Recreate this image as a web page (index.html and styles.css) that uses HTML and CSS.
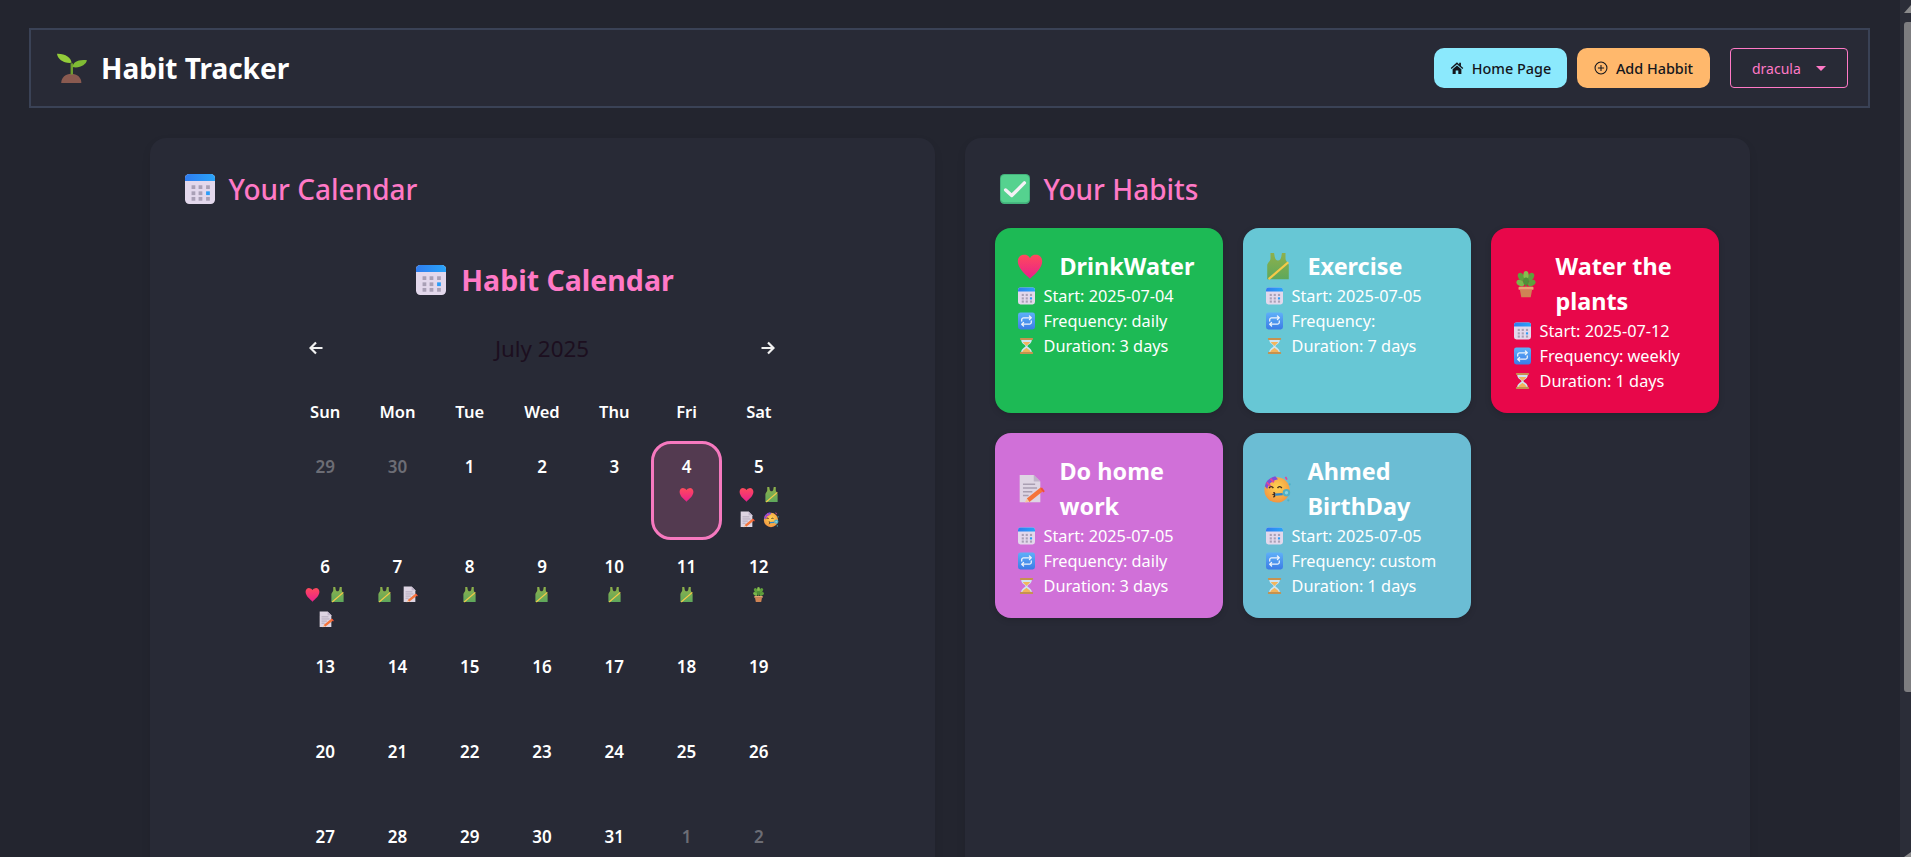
FILE: index.html
```html
<!DOCTYPE html>
<html lang="en">
<head>
    <meta charset="UTF-8">
    <meta name="viewport" content="width=device-width, initial-scale=1.0">
    <title>Habit Tracker</title>
    <link rel="stylesheet" href="styles.css">
</head>
<body>
    <!-- emoji sprite -->
    <svg class="sprite" xmlns="http://www.w3.org/2000/svg">
        <defs>
            <linearGradient id="g-heart" x1="0" y1="0" x2="0" y2="1"><stop offset="0" stop-color="#ff4a5c"/><stop offset="1" stop-color="#e8208c"/></linearGradient>
            <linearGradient id="g-shirt" x1="0" y1="0" x2="0" y2="1"><stop offset="0" stop-color="#8fb04a"/><stop offset="1" stop-color="#5ea85c"/></linearGradient>
            <linearGradient id="g-repeat" x1="0" y1="0" x2="0" y2="1"><stop offset="0" stop-color="#5fb0f8"/><stop offset="1" stop-color="#3b7ce6"/></linearGradient>
            <linearGradient id="g-cal" x1="0" y1="0" x2="1" y2="0"><stop offset="0" stop-color="#2f7cf0"/><stop offset="1" stop-color="#2aa4f8"/></linearGradient>
            <radialGradient id="g-face" cx="0.5" cy="0.4" r="0.7"><stop offset="0" stop-color="#ffd452"/><stop offset="1" stop-color="#f08a3e"/></radialGradient>
        </defs>
        <symbol id="i-seedling" viewBox="0 0 32 32">
            <path d="M4.500 32c0-6 4.600-10 10.800-10S26 26 26 32z" fill="#8a5a50"/>
            <path d="M14.500 23V11h2.600v12z" fill="#6f9e2f"/>
            <path d="M15.500 10.500C15 5 9 .5 0 .8c.5 5.500 7 10.500 15.500 9.700z" fill="#93cc3a"/>
            <path d="M16.500 15c.5-5 5.500-8.500 15.500-7.300-1 4.500-7.500 9-15.500 7.300z" fill="#7fbb34"/>
        </symbol>
        <symbol id="i-calendar" viewBox="0 0 32 32">
            <rect width="32" height="32" rx="4.500" fill="#e3d8ec"/>
            <path d="M0 7.500V4.500A4.500 4.500 0 0 1 4.500 0h23A4.500 4.500 0 0 1 32 4.500v3z" fill="url(#g-cal)"/>
            <g fill="#a9a0b6">
                <rect x="7" y="12" width="4" height="4"/><rect x="14.500" y="12" width="4" height="4"/><rect x="22.500" y="12" width="4" height="4"/>
                <rect x="7" y="18.500" width="4" height="4"/><rect x="14.500" y="18.500" width="4" height="4"/>
                <rect x="7" y="24.500" width="4" height="4"/><rect x="14.500" y="24.500" width="4" height="4"/><rect x="22.500" y="24.500" width="4" height="4"/>
            </g>
            <rect x="22.500" y="18.500" width="4" height="4" fill="#2a9cf8"/>
        </symbol>
        <symbol id="i-check" viewBox="0 0 32 32">
            <rect width="32" height="32" rx="4.500" fill="#43b27c"/>
            <rect x="1" y="1" width="30" height="29" rx="4" fill="#55d28f"/>
            <path d="M6 17l6.500 6L26 9.500" fill="none" stroke="#f4f1f6" stroke-width="3.600" stroke-linecap="round" stroke-linejoin="round"/>
        </symbol>
        <symbol id="i-heart" viewBox="0 0 32 32">
            <path d="M16 29.500C10.500 24.500 3 18.500 3 11 3 6.300 6.600 3.500 10.300 4c2.700 0 4.700 1.400 5.700 3.700C17 5.400 19 4 21.700 4 25.400 3.500 29 6.300 29 11c0 7.500-7.500 13.500-13 18.500z" fill="url(#g-heart)"/>
        </symbol>
        <symbol id="i-shirt" viewBox="0 0 32 32">
            <path d="M8 2h3.800l.7 4c.5 2.500 1.500 4 3.500 4s3-1.500 3.500-4l.7-4H24v6c0 3 3.500 4.500 3.500 7.500V30h-23V15.500C4.500 12.500 8 11 8 8z" fill="url(#g-shirt)"/>
            <path d="M6 30L27 12" stroke="#f7c948" stroke-width="2.400"/>
        </symbol>
        <symbol id="i-plant" viewBox="0 0 32 32">
            <path d="M15.200 20V9h1.600v11z" fill="#6b7f3a"/>
            <ellipse cx="11" cy="8.500" rx="3.200" ry="4.800" transform="rotate(-30 11 8.500)" fill="#5f9f3c"/>
            <ellipse cx="21" cy="8.500" rx="3.200" ry="4.800" transform="rotate(30 21 8.500)" fill="#5f9f3c"/>
            <ellipse cx="16" cy="6.500" rx="2.800" ry="4.500" fill="#86bd4e"/>
            <ellipse cx="10" cy="15" rx="3" ry="4.500" transform="rotate(-60 10 15)" fill="#79b64a"/>
            <ellipse cx="22" cy="15" rx="3" ry="4.500" transform="rotate(60 22 15)" fill="#5f9f3c"/>
            <ellipse cx="16" cy="13" rx="3" ry="4" fill="#4f8f38"/>
            <rect x="8" y="19" width="16" height="3.200" rx="1" fill="#e6a272"/>
            <path d="M9.500 22h13L21 30h-10z" fill="#cf8354"/>
        </symbol>
        <symbol id="i-memo" viewBox="0 0 32 32">
            <path d="M5 1h15l7 7v22H5z" fill="#ded5e3"/>
            <path d="M20 1l7 7h-7z" fill="#bfb3c8"/>
            <path d="M8.500 11h13M8.500 15h15M8.500 19h10M8.500 23h6" stroke="#a99fb2" stroke-width="1.500"/>
            <path d="M14 28l15-12" stroke="#f5733a" stroke-width="4.500"/>
            <path d="M28 15l3 4" stroke="#f04f3a" stroke-width="2"/>
            <path d="M10.500 30.500l2-4 2.500 3z" fill="#f7c9a0"/>
        </symbol>
        <symbol id="i-party" viewBox="0 0 32 32">
            <circle cx="15" cy="17" r="13.500" fill="url(#g-face)"/>
            <path d="M2 13C3 7 7 4 13 2.500l3 3C10 7 6 10 4.500 16z" fill="#7d4fd8"/>
            <path d="M4 9l4 4M8 5l3.500 4" stroke="#e0489a" stroke-width="2"/>
            <path d="M6.500 15c1-2 3.500-2 4.500 0M15.500 15c1-2 3.500-2 4.500 0" fill="none" stroke="#402a20" stroke-width="1.500"/>
            <path d="M11 20c2 0 2 1.500.5 2 1.500.5 1.500 2-.5 2.500" fill="none" stroke="#402a20" stroke-width="1.500"/>
            <path d="M13 22l8-.5" stroke="#2f86c9" stroke-width="2.500"/>
            <circle cx="25" cy="20" r="4" fill="#4fb0c8"/>
            <circle cx="25" cy="20" r="1.800" fill="#8fd3dc"/>
            <path d="M24 3l1.500 3" stroke="#e0489a" stroke-width="1.800"/>
            <circle cx="28.500" cy="11" r="1.200" fill="#4fb0c8"/>
            <circle cx="27" cy="28" r="1.200" fill="#4fb0c8"/>
        </symbol>
        <symbol id="i-repeat" viewBox="0 0 32 32">
            <rect width="32" height="32" rx="4.500" fill="url(#g-repeat)"/>
            <g fill="none" stroke="#eef4fb" stroke-width="2.400" stroke-linecap="round" stroke-linejoin="round">
                <path d="M7 16v-2.500A3.500 3.500 0 0 1 10.500 10H25M21.500 6.500L25 10l-3.500 3.500"/>
                <path d="M25 16v2.500a3.500 3.500 0 0 1-3.500 3.500H7M10.500 18.500L7 22l3.500 3.500"/>
            </g>
        </symbol>
        <symbol id="i-hourglass" viewBox="0 0 32 32">
            <path d="M6 4h20c0 7-6.500 8.500-8.500 12 2 3.500 8.500 5 8.500 12H6c0-7 6.500-8.500 8.500-12C12.500 12.500 6 11 6 4z" fill="#cfe5f2"/>
            <path d="M9 8.500h14c-1.200 3-5.200 4.500-7 7.500-1.800-3-5.800-4.500-7-7.500z" fill="#f2b55c"/>
            <path d="M16 19.500c-2.500 2.500-7.500 4.500-8 8h16c-.5-3.500-5.500-5.500-8-8z" fill="#f2b55c"/>
            <rect x="3.500" y="1" width="25" height="3.500" rx="1.500" fill="#c6924f"/>
            <rect x="3.500" y="27.500" width="25" height="3.500" rx="1.500" fill="#c6924f"/>
        </symbol>
    </svg>

    <div class="app">
        <main class="page">
            <header class="navbar">
                <div class="brand">
                    <svg class="brand-icon"><use href="#i-seedling"/></svg>
                    <h1>Habit Tracker</h1>
                </div>
                <div class="nav-actions">
                    <a class="btn btn-home">
                        <svg class="btn-icon" viewBox="0 0 16 16"><path d="M8 1.500L.8 8l1 1.100L8 3.700l6.200 5.400 1-1.100-2.700-2.400V2h-2v1.900z" fill="currentColor"/><path d="M3 9.400l5-4.400 5 4.400v5.400H9.500v-4h-3v4H3z" fill="currentColor"/></svg>
                        Home Page
                    </a>
                    <a class="btn btn-add">
                        <svg class="btn-icon" viewBox="0 0 16 16"><circle cx="8" cy="8" r="6.800" fill="none" stroke="currentColor" stroke-width="1.200"/><path d="M8 4.500v7M4.500 8h7" stroke="currentColor" stroke-width="1.200"/></svg>
                        Add Habbit
                    </a>
                    <div class="theme-select">dracula<span class="caret"></span></div>
                </div>
            </header>

            <div class="columns">
                <section class="panel">
                    <h2 class="panel-title"><svg><use href="#i-calendar"/></svg>Your Calendar</h2>

                    <div class="calendar">
                        <h3 class="calendar-title"><svg><use href="#i-calendar"/></svg>Habit Calendar</h3>
                        <div class="calendar-nav">
                            <svg class="arrow" viewBox="0 0 14 14"><path d="M13.500 7H2M7 1.500L1.500 7 7 12.500" fill="none" stroke="currentColor" stroke-width="2.200"/></svg>
                            <span class="month">July 2025</span>
                            <svg class="arrow" viewBox="0 0 14 14"><path d="M.5 7H12M7 1.500L12.500 7 7 12.500" fill="none" stroke="currentColor" stroke-width="2.200"/></svg>
                        </div>
                        <div class="weekdays">
                            <span>Sun</span><span>Mon</span><span>Tue</span><span>Wed</span><span>Thu</span><span>Fri</span><span>Sat</span>
                        </div>
                        <div class="days">
                            <div class="day muted"><span class="num">29</span></div>
                            <div class="day muted"><span class="num">30</span></div>
                            <div class="day"><span class="num">1</span></div>
                            <div class="day"><span class="num">2</span></div>
                            <div class="day"><span class="num">3</span></div>
                            <div class="day today"><span class="num">4</span>
                                <div class="marks"><svg><use href="#i-heart"/></svg></div>
                            </div>
                            <div class="day"><span class="num">5</span>
                                <div class="marks"><svg><use href="#i-heart"/></svg><svg><use href="#i-shirt"/></svg><svg><use href="#i-memo"/></svg><svg><use href="#i-party"/></svg></div>
                            </div>
                            <div class="day"><span class="num">6</span>
                                <div class="marks"><svg><use href="#i-heart"/></svg><svg><use href="#i-shirt"/></svg><svg><use href="#i-memo"/></svg></div>
                            </div>
                            <div class="day"><span class="num">7</span>
                                <div class="marks"><svg><use href="#i-shirt"/></svg><svg><use href="#i-memo"/></svg></div>
                            </div>
                            <div class="day"><span class="num">8</span>
                                <div class="marks"><svg><use href="#i-shirt"/></svg></div>
                            </div>
                            <div class="day"><span class="num">9</span>
                                <div class="marks"><svg><use href="#i-shirt"/></svg></div>
                            </div>
                            <div class="day"><span class="num">10</span>
                                <div class="marks"><svg><use href="#i-shirt"/></svg></div>
                            </div>
                            <div class="day"><span class="num">11</span>
                                <div class="marks"><svg><use href="#i-shirt"/></svg></div>
                            </div>
                            <div class="day"><span class="num">12</span>
                                <div class="marks"><svg><use href="#i-plant"/></svg></div>
                            </div>
                            <div class="day"><span class="num">13</span></div>
                            <div class="day"><span class="num">14</span></div>
                            <div class="day"><span class="num">15</span></div>
                            <div class="day"><span class="num">16</span></div>
                            <div class="day"><span class="num">17</span></div>
                            <div class="day"><span class="num">18</span></div>
                            <div class="day"><span class="num">19</span></div>
                            <div class="day"><span class="num">20</span></div>
                            <div class="day"><span class="num">21</span></div>
                            <div class="day"><span class="num">22</span></div>
                            <div class="day"><span class="num">23</span></div>
                            <div class="day"><span class="num">24</span></div>
                            <div class="day"><span class="num">25</span></div>
                            <div class="day"><span class="num">26</span></div>
                            <div class="day"><span class="num">27</span></div>
                            <div class="day"><span class="num">28</span></div>
                            <div class="day"><span class="num">29</span></div>
                            <div class="day"><span class="num">30</span></div>
                            <div class="day"><span class="num">31</span></div>
                            <div class="day muted"><span class="num">1</span></div>
                            <div class="day muted"><span class="num">2</span></div>
                        </div>
                    </div>
                </section>

                <section class="panel">
                    <h2 class="panel-title"><svg><use href="#i-check"/></svg>Your Habits</h2>

                    <div class="habit-grid">
                        <article class="habit green">
                            <h3><svg><use href="#i-heart"/></svg><span>DrinkWater</span></h3>
                            <p><svg><use href="#i-calendar"/></svg>Start: 2025-07-04</p>
                            <p><svg><use href="#i-repeat"/></svg>Frequency: daily</p>
                            <p><svg><use href="#i-hourglass"/></svg>Duration: 3 days</p>
                        </article>
                        <article class="habit teal">
                            <h3><svg><use href="#i-shirt"/></svg><span>Exercise</span></h3>
                            <p><svg><use href="#i-calendar"/></svg>Start: 2025-07-05</p>
                            <p><svg><use href="#i-repeat"/></svg>Frequency:</p>
                            <p><svg><use href="#i-hourglass"/></svg>Duration: 7 days</p>
                        </article>
                        <article class="habit crimson">
                            <h3><svg><use href="#i-plant"/></svg><span>Water the plants</span></h3>
                            <p><svg><use href="#i-calendar"/></svg>Start: 2025-07-12</p>
                            <p><svg><use href="#i-repeat"/></svg>Frequency: weekly</p>
                            <p><svg><use href="#i-hourglass"/></svg>Duration: 1 days</p>
                        </article>
                        <article class="habit orchid">
                            <h3><svg><use href="#i-memo"/></svg><span>Do home work</span></h3>
                            <p><svg><use href="#i-calendar"/></svg>Start: 2025-07-05</p>
                            <p><svg><use href="#i-repeat"/></svg>Frequency: daily</p>
                            <p><svg><use href="#i-hourglass"/></svg>Duration: 3 days</p>
                        </article>
                        <article class="habit sky">
                            <h3><svg><use href="#i-party"/></svg><span>Ahmed BirthDay</span></h3>
                            <p><svg><use href="#i-calendar"/></svg>Start: 2025-07-05</p>
                            <p><svg><use href="#i-repeat"/></svg>Frequency: custom</p>
                            <p><svg><use href="#i-hourglass"/></svg>Duration: 1 days</p>
                        </article>
                    </div>
                </section>
            </div>
        </main>

        <!-- window scrollbar as it shows in the screenshot -->
        <div class="scrollbar">
            <span class="scroll-up"></span>
            <span class="scroll-thumb"></span>
            <span class="scroll-down"></span>
        </div>
    </div>
</body>
</html>
```

FILE: styles.css
```css
:root {
    --bg: #23252f;
    --panel: #282a36;
    --pink: #ff79c6;
    --cyan: #8be9fd;
    --orange: #ffb86c;
    --text: #ffffff;
    --line: #3a4256;
}

* {
    margin: 0;
    padding: 0;
    box-sizing: border-box;
    font-family: 'Noto Sans', 'Open Sans', sans-serif;
}

html, body {
    height: 100%;
    overflow: hidden;
}

body {
    background-color: var(--bg);
    color: var(--text);
}

.sprite {
    position: absolute;
    width: 0;
    height: 0;
}

.app {
    display: flex;
    height: 100vh;
}

.page {
    flex: 1;
    min-width: 0;
    overflow: hidden;
    padding: 28px 30px 0 29px;
}

/* scrollbar */
.scrollbar {
    width: 11px;
    flex: none;
    display: flex;
    flex-direction: column;
    align-items: flex-end;
    justify-content: space-between;
    background-color: #2b2d38;
    padding: 5px 0 0;
}

.scroll-up, .scroll-down {
    width: 7px;
    height: 0;
    border-left: 7px solid transparent;
    border-bottom: 8px solid #8a8a8c;
}

.scroll-down {
    border-bottom: 5px solid #8a8a8c;
}

.scroll-thumb {
    width: 7px;
    height: 670px;
    margin-bottom: auto;
    margin-top: 9px;
    background-color: #7d7d80;
    border-radius: 3px 0 0 3px;
}

/* navbar */
.navbar {
    display: flex;
    align-items: center;
    justify-content: space-between;
    height: 80px;
    padding: 0 20px 0 26px;
    background-color: var(--panel);
    border: 2px solid var(--line);
    margin-bottom: 30px;
}

.brand {
    display: flex;
    align-items: center;
    gap: 14px;
}

.brand-icon {
    width: 30px;
    height: 30px;
}

h1 {
    font-size: 28px;
    font-weight: 700;
}

.nav-actions {
    display: flex;
    align-items: center;
    gap: 10px;
}

.btn {
    display: flex;
    align-items: center;
    justify-content: center;
    gap: 8px;
    width: 133px;
    height: 40px;
    border-radius: 10px;
    font-size: 14.4px;
    font-weight: 500;
    color: #14161c;
}

.btn-icon {
    width: 14px;
    height: 14px;
}

.btn-home {
    background-color: var(--cyan);
}

.btn-add {
    background-color: var(--orange);
}

.theme-select {
    display: flex;
    align-items: center;
    justify-content: space-between;
    width: 118px;
    height: 40px;
    margin-left: 10px;
    padding: 0 21px;
    border: 1px solid var(--pink);
    border-radius: 4px;
    font-size: 14px;
    color: var(--pink);
}

.caret {
    border-left: 5px solid transparent;
    border-right: 5px solid transparent;
    border-top: 5px solid var(--pink);
}

/* columns */
.columns {
    display: grid;
    grid-template-columns: 785px 785px;
    gap: 30px;
    width: 1600px;
    margin: 0 auto;
}

.panel {
    min-height: 900px;
    padding: 30px;
    background-color: var(--panel);
    border-radius: 16px;
    box-shadow: 0 4px 10px rgba(0, 0, 0, 0.08);
}

.panel-title {
    display: flex;
    align-items: center;
    gap: 14px;
    height: 42px;
    padding-left: 5px;
    font-size: 28px;
    font-weight: 500;
    color: var(--pink);
}

.panel-title svg, .calendar-title svg {
    width: 30px;
    height: 30px;
}

/* calendar */
.calendar {
    width: 505px;
    margin: 49px auto 0;
}

.calendar-title {
    display: flex;
    align-items: center;
    justify-content: center;
    gap: 15px;
    height: 42px;
    padding-left: 6px;
    font-size: 28.5px;
    font-weight: 700;
    color: var(--pink);
}

.calendar-nav {
    display: flex;
    align-items: center;
    justify-content: space-between;
    height: 34px;
    margin-top: 30px;
    padding: 0 19px;
}

.arrow {
    width: 14px;
    height: 14px;
    color: #f1f1f1;
}

.month {
    font-size: 22.4px;
    color: #1c0f1f;
}

.weekdays {
    display: grid;
    grid-template-columns: repeat(7, 1fr);
    gap: 1px;
    height: 25px;
    margin-top: 34px;
    margin-bottom: 17px;
    text-align: center;
    font-size: 16.5px;
    font-weight: 600;
    line-height: 25px;
}

.days {
    display: grid;
    grid-template-columns: repeat(7, 1fr);
    grid-auto-rows: minmax(84px, auto);
    gap: 1px;
}

.day {
    padding: 10px 8px 9px;
    border: 3px solid transparent;
    border-radius: 20px;
    text-align: center;
}

.num {
    display: block;
    height: 25px;
    font-size: 17px;
    font-weight: 600;
    line-height: 25px;
}

.muted .num {
    color: #6c6d75;
}

.today {
    background-color: #533a50;
    border-color: #f679bf;
}

.marks {
    display: flex;
    flex-wrap: wrap;
    justify-content: center;
    gap: 8px;
    margin-top: 7px;
}

.marks svg {
    width: 17px;
    height: 17px;
}

/* habits */
.habit-grid {
    display: grid;
    grid-template-columns: repeat(3, 228px);
    gap: 20px;
    margin-top: 17.5px;
}

.habit {
    padding: 21px 20px 19px;
    border-radius: 16px;
    box-shadow: 0 2px 6px rgba(0, 0, 0, 0.15);
}

.habit h3 {
    display: flex;
    align-items: center;
    gap: 15px;
    font-size: 23.4px;
    font-weight: 700;
    line-height: 35px;
}

.habit h3 svg {
    flex: none;
    width: 30px;
    height: 30px;
}

.habit p {
    display: flex;
    align-items: center;
    gap: 9px;
    padding-left: 3px;
    font-size: 16.3px;
    line-height: 25px;
}

.habit p svg {
    flex: none;
    width: 17px;
    height: 18px;
}

.green { background-color: #1dba55; }
.teal { background-color: #67c7d5; }
.crimson { background-color: #e8074a; }
.orchid { background-color: #d070d8; }
.sky { background-color: #6bbdd4; }
```
